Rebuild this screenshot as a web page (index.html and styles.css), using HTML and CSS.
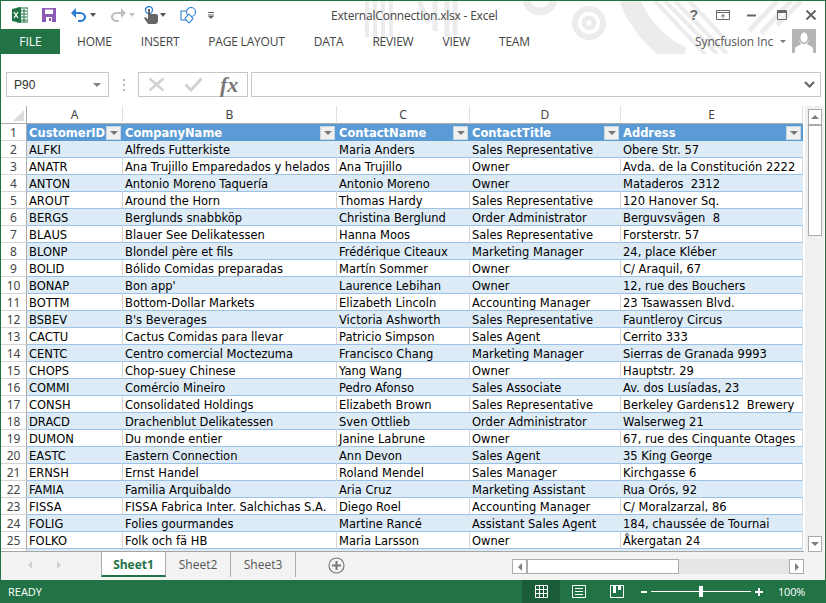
FILE: index.html
```html
<!DOCTYPE html>
<html lang="en">
<head>
    <meta charset="UTF-8">
    <title>ExternalConnection.xlsx - Excel</title>
    <link rel="stylesheet" href="styles.css">
</head>
<body>
<div class="window">
    <!-- Title bar and ribbon tabs -->
    <header class="top">
        <svg class="pattern" width="824" height="53" viewBox="0 0 824 53">
            <g fill="none" stroke="#ececec">
                <path d="M366 0V36M374 0V36M382 0V36M390 0V36" stroke-width="4"/>
                <path d="M418 0L428 22M434 0V30M446 0V36M454 0V34" stroke-width="5"/>
                <path d="M526 0C528 14 550 14 552 0" stroke-width="8"/>
                <circle cx="588" cy="22" r="14" stroke-width="6"/>
                <circle cx="588" cy="22" r="5" stroke-width="5"/>
                <path d="M628 -2C638 22 654 44 682 56" stroke-width="20"/>
                <path d="M654 0L704 53M664 0L716 53M674 0L726 53" stroke-width="4"/>
                <path d="M688 0L726 40" stroke-width="4"/>
                <path d="M748 30L776 0M760 32L790 0M776 24L800 0" stroke-width="5"/>
            </g>
        </svg>
        <div class="titlebar">
            <div class="qat">
                <svg class="ico" width="16" height="16" viewBox="0 0 16 16">
                    <path d="M5 1H16V15H5z" fill="#fff" stroke="#217346"/>
                    <path d="M9 4H15M9 7H15M9 10H15M9 13H15M12 2V15" stroke="#217346"/>
                    <path d="M0 2L9 0V16L0 14z" fill="#217346"/>
                    <path d="M2 5L6 11M6 5L2 11" stroke="#fff" stroke-width="1.3"/>
                </svg>
                <svg class="ico ico-save" width="14" height="14" viewBox="0 0 14 14">
                    <path d="M0 0H14V14H0z" fill="#8b58b5"/>
                    <path d="M3 1.500H11V6H3z" fill="#fff"/>
                    <path d="M4 9H10V14H4z" fill="#fff"/>
                    <path d="M7 10H9V13H7z" fill="#8b58b5"/>
                </svg>
                <svg class="ico ico-undo" width="16" height="14" viewBox="0 0 16 14">
                    <path d="M3 5H9C12 5 14 7 14 9C14 11 12 13 9 13H7" fill="none" stroke="#2b7cd3" stroke-width="2.2"/>
                    <path d="M0 5L5 0V10z" fill="#2b7cd3"/>
                </svg>
                <span class="caret caret-dark"></span>
                <svg class="ico ico-redo" width="16" height="14" viewBox="0 0 16 14">
                    <path d="M13 5H7C4 5 2 7 2 9C2 11 4 13 7 13H9" fill="none" stroke="#bdbdbd" stroke-width="2.2"/>
                    <path d="M16 5L11 0V10z" fill="#bdbdbd"/>
                </svg>
                <span class="caret caret-light"></span>
                <svg class="ico ico-touch" width="17" height="18" viewBox="0 0 17 18">
                    <circle cx="6" cy="4" r="3.5" fill="none" stroke="#2b7cd3" stroke-width="1.3"/>
                    <path d="M5 3H7V8H13C14.500 8 15 9 15 10V16L13 18H5L1 12L2 11L5 13z" fill="#666"/>
                </svg>
                <span class="caret caret-touch"></span>
                <svg class="ico ico-shape" width="17" height="17" viewBox="0 0 17 17">
                    <path d="M1 4H11V13H1z" fill="#fff" stroke="#2b7cd3" stroke-width="1.1"/>
                    <circle cx="11" cy="5" r="4.500" fill="#fff" stroke="#2b7cd3" stroke-width="1.1"/>
                    <path d="M9 7L13 11.500L9 16L5 11.500z" fill="#fff" stroke="#2b7cd3" stroke-width="1.1"/>
                </svg>
                <svg class="ico ico-more" width="6" height="7" viewBox="0 0 6 7">
                    <path d="M0 0.500H6M0 3H6" stroke="#666"/>
                    <path d="M0 4H6L3 7z" fill="#666"/>
                </svg>
            </div>
            <div class="doc-title">ExternalConnection.xlsx - Excel</div>
            <div class="win-btns">
                <span class="help">?</span>
                <svg class="btn-ribbon" width="14" height="10" viewBox="0 0 14 10">
                    <path d="M0.500 0.500H13.500V9.500H0.500z" fill="none" stroke="#666"/>
                    <path d="M1 2.500H13" stroke="#666"/>
                    <path d="M7 8.500V4.500M5 6.500L7 4.500L9 6.500" fill="none" stroke="#666"/>
                </svg>
                <svg class="btn-min" width="9" height="3" viewBox="0 0 9 3"><path d="M0 1.500H9" stroke="#666" stroke-width="2"/></svg>
                <svg class="btn-max" width="10" height="10" viewBox="0 0 10 10">
                    <path d="M0.500 0.500H9.500V9.500H0.500z" fill="none" stroke="#666"/>
                    <path d="M0 2H10" stroke="#666" stroke-width="2"/>
                </svg>
                <svg class="btn-close" width="10" height="10" viewBox="0 0 10 10"><path d="M0.500 0.500L9.500 9.500M9.500 0.500L0.500 9.500" stroke="#666" stroke-width="2"/></svg>
            </div>
        </div>
        <nav class="tabs">
            <span class="tab-file">FILE</span>
            <span class="tab">HOME</span>
            <span class="tab">INSERT</span>
            <span class="tab">PAGE LAYOUT</span>
            <span class="tab">DATA</span>
            <span class="tab">REVIEW</span>
            <span class="tab">VIEW</span>
            <span class="tab">TEAM</span>
            <div class="account">
                <span class="account-name">Syncfusion Inc</span>
                <span class="account-caret"></span>
                <svg class="avatar" width="24" height="24" viewBox="0 0 24 24">
                    <path d="M0 0H24V24H0z" fill="#b5b5b5"/>
                    <path d="M3 24V20C3 17 7 17 9 15C6 12 6 4 12 4C18 4 18 12 15 15C17 17 21 17 21 20V24z" fill="#fff"/>
                    <path d="M7 9C7 6 9 2 12 2C16 2 17 6 17 9C17 13 14 15 12 15C10 15 7 13 7 9z" fill="#b5b5b5"/>
                    <path d="M8.500 9C8.500 6 10 3.500 12 3.500C14.500 3.500 15.500 6 15.500 9C15.500 12 13.500 13.500 12 13.500C10.500 13.500 8.500 12 8.500 9z" fill="#fff"/>
                </svg>
            </div>
        </nav>
    </header>

    <!-- Formula bar -->
    <div class="formula-row">
        <div class="name-box">
            <span>P90</span>
            <span class="caret caret-mid"></span>
        </div>
        <div class="grip"><i></i><i></i><i></i></div>
        <div class="fx-box">
            <svg width="17" height="15" viewBox="0 0 17 15"><path d="M1.500 1.500L15.500 13.500M15.500 1.500L1.500 13.500" stroke="#d2d2d2" stroke-width="2.500"/></svg>
            <svg width="19" height="15" viewBox="0 0 19 15"><path d="M1.500 7.500L7 13L17.500 1.500" fill="none" stroke="#d2d2d2" stroke-width="3"/></svg>
            <span class="fx">fx</span>
        </div>
        <div class="formula-input">
            <svg width="11" height="7" viewBox="0 0 11 7"><path d="M1 1L5.500 5.500L10 1" fill="none" stroke="#666" stroke-width="2.200"/></svg>
        </div>
    </div>

    <!-- Worksheet -->
    <div class="sheet">
        <div class="grid-wrap">
            <table class="grid">
                <colgroup>
                    <col class="col-rh"><col class="col-a"><col class="col-b"><col class="col-c"><col class="col-d"><col class="col-e">
                </colgroup>
                <thead>
                    <tr class="letters">
                        <th class="corner"><span class="corner-tri"></span></th>
                        <th>A</th><th>B</th><th>C</th><th>D</th><th>E</th>
                    </tr>
                </thead>
                <tbody>
                    <tr class="head">
                        <th>1</th>
                        <td><div class="hcell"><span>CustomerID</span><span class="filter"></span></div></td>
                        <td><div class="hcell"><span>CompanyName</span><span class="filter"></span></div></td>
                        <td><div class="hcell"><span>ContactName</span><span class="filter"></span></div></td>
                        <td><div class="hcell"><span>ContactTitle</span><span class="filter"></span></div></td>
                        <td><div class="hcell"><span>Address</span><span class="filter"></span></div></td>
                    </tr>
                    <tr><th>2</th><td>ALFKI</td><td>Alfreds Futterkiste</td><td>Maria Anders</td><td>Sales Representative</td><td>Obere Str. 57</td></tr>
                    <tr><th>3</th><td>ANATR</td><td>Ana Trujillo Emparedados y helados</td><td>Ana Trujillo</td><td>Owner</td><td>Avda. de la Constitución 2222</td></tr>
                    <tr><th>4</th><td>ANTON</td><td>Antonio Moreno Taquería</td><td>Antonio Moreno</td><td>Owner</td><td>Mataderos&nbsp; 2312</td></tr>
                    <tr><th>5</th><td>AROUT</td><td>Around the Horn</td><td>Thomas Hardy</td><td>Sales Representative</td><td>120 Hanover Sq.</td></tr>
                    <tr><th>6</th><td>BERGS</td><td>Berglunds snabbköp</td><td>Christina Berglund</td><td>Order Administrator</td><td>Berguvsvägen&nbsp; 8</td></tr>
                    <tr><th>7</th><td>BLAUS</td><td>Blauer See Delikatessen</td><td>Hanna Moos</td><td>Sales Representative</td><td>Forsterstr. 57</td></tr>
                    <tr><th>8</th><td>BLONP</td><td>Blondel père et fils</td><td>Frédérique Citeaux</td><td>Marketing Manager</td><td>24, place Kléber</td></tr>
                    <tr><th>9</th><td>BOLID</td><td>Bólido Comidas preparadas</td><td>Martín Sommer</td><td>Owner</td><td>C/ Araquil, 67</td></tr>
                    <tr><th>10</th><td>BONAP</td><td>Bon app'</td><td>Laurence Lebihan</td><td>Owner</td><td>12, rue des Bouchers</td></tr>
                    <tr><th>11</th><td>BOTTM</td><td>Bottom-Dollar Markets</td><td>Elizabeth Lincoln</td><td>Accounting Manager</td><td>23 Tsawassen Blvd.</td></tr>
                    <tr><th>12</th><td>BSBEV</td><td>B's Beverages</td><td>Victoria Ashworth</td><td>Sales Representative</td><td>Fauntleroy Circus</td></tr>
                    <tr><th>13</th><td>CACTU</td><td>Cactus Comidas para llevar</td><td>Patricio Simpson</td><td>Sales Agent</td><td>Cerrito 333</td></tr>
                    <tr><th>14</th><td>CENTC</td><td>Centro comercial Moctezuma</td><td>Francisco Chang</td><td>Marketing Manager</td><td>Sierras de Granada 9993</td></tr>
                    <tr><th>15</th><td>CHOPS</td><td>Chop-suey Chinese</td><td>Yang Wang</td><td>Owner</td><td>Hauptstr. 29</td></tr>
                    <tr><th>16</th><td>COMMI</td><td>Comércio Mineiro</td><td>Pedro Afonso</td><td>Sales Associate</td><td>Av. dos Lusíadas, 23</td></tr>
                    <tr><th>17</th><td>CONSH</td><td>Consolidated Holdings</td><td>Elizabeth Brown</td><td>Sales Representative</td><td>Berkeley Gardens12&nbsp; Brewery</td></tr>
                    <tr><th>18</th><td>DRACD</td><td>Drachenblut Delikatessen</td><td>Sven Ottlieb</td><td>Order Administrator</td><td>Walserweg 21</td></tr>
                    <tr><th>19</th><td>DUMON</td><td>Du monde entier</td><td>Janine Labrune</td><td>Owner</td><td>67, rue des Cinquante Otages</td></tr>
                    <tr><th>20</th><td>EASTC</td><td>Eastern Connection</td><td>Ann Devon</td><td>Sales Agent</td><td>35 King George</td></tr>
                    <tr><th>21</th><td>ERNSH</td><td>Ernst Handel</td><td>Roland Mendel</td><td>Sales Manager</td><td>Kirchgasse 6</td></tr>
                    <tr><th>22</th><td>FAMIA</td><td>Familia Arquibaldo</td><td>Aria Cruz</td><td>Marketing Assistant</td><td>Rua Orós, 92</td></tr>
                    <tr><th>23</th><td>FISSA</td><td>FISSA Fabrica Inter. Salchichas S.A.</td><td>Diego Roel</td><td>Accounting Manager</td><td>C/ Moralzarzal, 86</td></tr>
                    <tr><th>24</th><td>FOLIG</td><td>Folies gourmandes</td><td>Martine Rancé</td><td>Assistant Sales Agent</td><td>184, chaussée de Tournai</td></tr>
                    <tr><th>25</th><td>FOLKO</td><td>Folk och fä HB</td><td>Maria Larsson</td><td>Owner</td><td>Åkergatan 24</td></tr>
                    <tr><th></th><td></td><td></td><td></td><td></td><td></td></tr>
                </tbody>
            </table>
        </div>
        <div class="vscroll">
            <div class="sb-btn"><span class="tri tri-up"></span></div>
            <div class="sb-thumb"></div>
            <div class="sb-track"></div>
            <div class="sb-btn"><span class="tri tri-down"></span></div>
        </div>
    </div>

    <!-- Sheet tabs and horizontal scrollbar -->
    <div class="sheet-bar">
        <div class="sheet-nav"><span class="tri tri-left"></span><span class="tri tri-right"></span></div>
        <span class="sheet-tab sheet-active">Sheet1</span>
        <span class="sheet-tab">Sheet2</span>
        <span class="sheet-tab">Sheet3</span>
        <svg class="add-sheet" width="17" height="17" viewBox="0 0 17 17">
            <circle cx="8.500" cy="8.500" r="7.500" fill="none" stroke="#777" stroke-width="1.200"/>
            <path d="M8.500 4V13M4 8.500H13" stroke="#777" stroke-width="2"/>
        </svg>
        <div class="hscroll">
            <div class="sb-btn-h"><span class="tri tri-left tri-dark"></span></div>
            <div class="hthumb"></div>
            <div class="htrack"></div>
            <div class="sb-btn-h"><span class="tri tri-right tri-dark"></span></div>
        </div>
    </div>

    <!-- Status bar -->
    <footer class="status">
        <span class="ready">READY</span>
        <div class="view-btn view-on">
            <svg width="13" height="13" viewBox="0 0 13 13"><path d="M0.500 0.500H12.500V12.500H0.500zM4.500 0.500V12.500M8.500 0.500V12.500M0.500 4.500H12.500M0.500 8.500H12.500" fill="none" stroke="#fff"/></svg>
        </div>
        <div class="view-btn">
            <svg width="14" height="13" viewBox="0 0 14 13"><path d="M0.500 0.500H13.500V12.500H0.500z" fill="none" stroke="#fff"/><path d="M3 3.500H11M3 6.500H11M3 9.500H11" stroke="#fff"/></svg>
        </div>
        <div class="view-btn">
            <svg width="14" height="13" viewBox="0 0 14 13"><path d="M0.500 0.500H13.500V12.500H0.500z" fill="none" stroke="#fff"/><path d="M3 0H6V8H3zM8 0H11V5H8z" fill="#fff"/></svg>
        </div>
        <div class="zoom">
            <span class="zoom-minus"></span>
            <div class="slider"><span class="slider-knob"></span></div>
            <span class="zoom-plus"></span>
        </div>
        <span class="zoom-pct">100%</span>
    </footer>
</div>
</body>
</html>
```
FILE: styles.css
```css
* {
    box-sizing: border-box;
}

html, body {
    margin: 0;
    padding: 0;
}

body {
    font-family: "Open Sans", "Noto Sans", sans-serif;
    font-size: 12px;
    color: #444;
    background-color: #fff;
    overflow: hidden;
}

.window {
    width: 826px;
    height: 603px;
    display: flex;
    flex-direction: column;
    border: 1px solid #217346;
    border-bottom: none;
    background-color: #fff;
}

/* Title bar */
.top {
    position: relative;
    height: 53px;
    flex: none;
}

.pattern {
    position: absolute;
    top: 0;
    left: 0;
}

.titlebar {
    position: relative;
    height: 28px;
    display: flex;
    align-items: center;
}

.qat {
    width: 330px;
    display: flex;
    align-items: center;
    padding-left: 11px;
}

.ico-save { margin-left: 14px; }
.ico-undo { margin-left: 15px; }
.ico-redo { margin-left: 14px; }
.ico-touch { margin-left: 8px; }
.ico-shape { margin-left: 14px; }
.ico-more { margin-left: 11px; }

.caret {
    display: inline-block;
    width: 0;
    height: 0;
    border-left: 3.5px solid transparent;
    border-right: 3.5px solid transparent;
}

.caret-dark {
    margin-left: 3px;
    border-top: 4px solid #555;
}

.caret-touch {
    border-top: 4px solid #555;
}

.caret-light {
    margin-left: 3px;
    border-top: 4px solid #c6c6c6;
}

.caret-mid {
    border-left-width: 4px;
    border-right-width: 4px;
    border-top: 4px solid #808080;
}

.doc-title {
    font-size: 12px;
    letter-spacing: -0.2px;
    color: #444;
}

.win-btns {
    margin-left: auto;
    display: flex;
    align-items: center;
    padding-right: 9px;
}

.help {
    font-family: "Liberation Sans", sans-serif;
    font-size: 14px;
    font-weight: bold;
    color: #666;
}

.btn-ribbon { margin-left: 18px; }
.btn-min { margin-left: 17px; }
.btn-max { margin-left: 21px; }
.btn-close { margin-left: 19px; }

/* Ribbon tabs */
.tabs {
    position: relative;
    height: 25px;
    display: flex;
    align-items: center;
    gap: 29px;
}

.tab-file {
    width: 59px;
    height: 25px;
    line-height: 25px;
    text-align: center;
    color: #fff;
    background-color: #217346;
    margin-right: -12px;
}

.tab {
    color: #444;
    letter-spacing: -0.2px;
}

.account {
    margin-left: auto;
    display: flex;
    align-items: flex-start;
    height: 25px;
    padding-right: 9px;
}

.account-name {
    color: #555;
    letter-spacing: -0.15px;
    line-height: 25px;
}

.account-caret {
    width: 0;
    height: 0;
    margin: 11px 6px 0 7px;
    border-left: 3px solid transparent;
    border-right: 3px solid transparent;
    border-top: 3px solid #777;
}

/* Formula bar */
.formula-row {
    flex: none;
    height: 25px;
    margin-top: 18px;
    display: flex;
    align-items: stretch;
    padding: 0 4px 0 5px;
}

.name-box {
    width: 103px;
    border: 1px solid #c6c6c6;
    display: flex;
    align-items: center;
    justify-content: space-between;
    padding: 0 7px 0 7px;
    font-family: "Liberation Sans", sans-serif;
    font-size: 12px;
    color: #333;
}

.grip {
    width: 29px;
    display: flex;
    flex-direction: column;
    align-items: center;
    justify-content: center;
    gap: 3px;
}

.grip i {
    width: 2px;
    height: 2px;
    background-color: #b5b5b5;
}

.fx-box {
    width: 110px;
    border: 1px solid #c6c6c6;
    display: flex;
    align-items: center;
    gap: 19px;
    padding-left: 9px;
}

.fx {
    font-family: "Liberation Serif", serif;
    font-style: italic;
    font-weight: bold;
    font-size: 22px;
    line-height: 20px;
    color: #777;
    margin-left: -2px;
}

.formula-input {
    flex: 1;
    margin-left: 3px;
    border: 1px solid #c6c6c6;
    display: flex;
    align-items: center;
    justify-content: flex-end;
    padding-right: 5px;
}

/* Worksheet */
.sheet {
    flex: none;
    height: 446px;
    margin-top: 9px;
    display: flex;
}

.grid-wrap {
    width: 803px;
    height: 446px;
    overflow: hidden;
    border-bottom: 1px solid #a6a6a6;
}

.grid {
    width: 802px;
    table-layout: fixed;
    border-collapse: separate;
    border-spacing: 0;
    font-family: "DejaVu Sans", sans-serif;
    font-size: 11.5px;
    color: #000;
}

.col-rh { width: 26px; }
.col-a { width: 96px; }
.col-b { width: 214px; }
.col-c { width: 133px; }
.col-d { width: 151px; }
.col-e { width: 182px; }

.letters th {
    height: 18px;
    padding: 0;
    font-family: "Noto Sans", sans-serif;
    font-size: 12px;
    font-weight: normal;
    color: #444;
    border-right: 1px solid #e1e1e1;
    border-bottom: 1px solid #ababab;
}

.corner {
    position: relative;
    border-right-color: #ababab !important;
}

.corner-tri {
    position: absolute;
    right: 2px;
    bottom: 2px;
    width: 0;
    height: 0;
    border-left: 11px solid transparent;
    border-bottom: 11px solid #dcdcdc;
}

.grid tbody th {
    height: 17px;
    padding: 2px 0 0;
    font-family: "Noto Sans", sans-serif;
    font-size: 12px;
    font-weight: normal;
    line-height: 14px;
    color: #444;
    background-color: #fff;
    border-right: 1px solid #ababab;
    border-bottom: 1px solid #d4d4d4;
}

.grid td {
    height: 17px;
    padding: 2px 2px 0 2px;
    line-height: 14px;
    white-space: nowrap;
    overflow: hidden;
    background-color: #fff;
    border-right: 1px solid #d4d4d4;
    border-bottom: 1px solid #9bc2e6;
}

.grid tbody tr:nth-child(even) td {
    background-color: #ddebf7;
    border-right-color: #ddebf7;
}

.grid tbody tr.head td {
    padding: 0 0 0 2px;
    background-color: #5b9bd5;
    border-right-color: #5b9bd5;
    border-bottom-color: #5b9bd5;
    color: #fff;
    font-weight: bold;
}

.hcell {
    display: flex;
    align-items: center;
    justify-content: space-between;
    height: 16px;
    padding-top: 1px;
}

.filter {
    position: relative;
    flex: none;
    width: 15px;
    height: 14px;
    margin-right: 1px;
    background-color: #f0f0f0;
    border: 1px solid #c8d6e2;
}

.filter::after {
    content: "";
    position: absolute;
    left: 3px;
    top: 4px;
    border-left: 4px solid transparent;
    border-right: 4px solid transparent;
    border-top: 4px solid #777;
}

/* Scrollbars */
.vscroll {
    width: 19px;
    margin-left: 1px;
    padding: 3px 2px 0 3px;
    display: flex;
    flex-direction: column;
    background-color: #f0f0f0;
}

.sb-btn {
    flex: none;
    height: 16px;
    border: 1px solid #ababab;
    background-color: #fff;
    display: flex;
    align-items: center;
    justify-content: center;
}

.sb-thumb {
    flex: none;
    height: 111px;
    border: 1px solid #ababab;
    background-color: #fff;
}

.sb-track {
    flex: 1;
}

.tri {
    display: inline-block;
    width: 0;
    height: 0;
}

.tri-up {
    border-left: 4px solid transparent;
    border-right: 4px solid transparent;
    border-bottom: 4px solid #808080;
}

.tri-down {
    border-left: 4px solid transparent;
    border-right: 4px solid transparent;
    border-top: 4px solid #808080;
}

.tri-left {
    border-top: 4px solid transparent;
    border-bottom: 4px solid transparent;
    border-right: 4px solid #d0d0d0;
}

.tri-right {
    border-top: 4px solid transparent;
    border-bottom: 4px solid transparent;
    border-left: 4px solid #d0d0d0;
}

.tri-left.tri-dark {
    border-right-color: #808080;
}

.tri-right.tri-dark {
    border-left-color: #808080;
}

/* Sheet tabs */
.sheet-bar {
    flex: none;
    height: 28px;
    display: flex;
    align-items: flex-start;
    background-color: #f3f3f3;
}

.sheet-nav {
    width: 100px;
    height: 25px;
    display: flex;
    align-items: center;
    gap: 25px;
    padding-left: 27px;
}

.sheet-tab {
    height: 25px;
    line-height: 26px;
    width: 65px;
    text-align: center;
    color: #555;
    border-right: 1px solid #ababab;
}

.sheet-active {
    color: #217346;
    font-weight: bold;
    background-color: #fff;
    border-left: 1px solid #ababab;
    border-right: 1px solid #ababab;
    border-bottom: 2px solid #217346;
}

.add-sheet {
    margin: 5px 0 0 32px;
}

.hscroll {
    margin-left: 167px;
    margin-top: 7px;
    width: 292px;
    height: 15px;
    display: flex;
    background-color: #e6e6e6;
}

.sb-btn-h {
    flex: none;
    width: 15px;
    border: 1px solid #ababab;
    background-color: #fff;
    display: flex;
    align-items: center;
    justify-content: center;
}

.hthumb {
    flex: none;
    width: 152px;
    border: 1px solid #ababab;
    background-color: #fff;
}

.htrack {
    flex: 1;
}

/* Status bar */
.status {
    flex: 1;
    margin: 0 -1px;
    display: flex;
    align-items: center;
    background-color: #217346;
    color: #fff;
    font-size: 11px;
}

.ready {
    width: 522px;
    padding-left: 8px;
}

.view-btn {
    width: 38px;
    height: 100%;
    display: flex;
    align-items: center;
    justify-content: center;
}

.view-on {
    background-color: #1a5c37;
}

.zoom {
    display: flex;
    align-items: center;
    margin-left: 5px;
}

.zoom-minus {
    width: 6px;
    height: 2px;
    background-color: #fff;
}

.slider {
    position: relative;
    width: 100px;
    height: 1px;
    margin: 0 4px;
    background-color: #fff;
}

.slider-knob {
    position: absolute;
    left: 48px;
    top: -5px;
    width: 4px;
    height: 11px;
    background-color: #fff;
}

.zoom-plus {
    position: relative;
    width: 8px;
    height: 2px;
    background-color: #fff;
}

.zoom-plus::after {
    content: "";
    position: absolute;
    left: 3px;
    top: -3px;
    width: 2px;
    height: 8px;
    background-color: #fff;
}

.zoom-pct {
    margin-left: 15px;
    letter-spacing: -0.2px;
}
```
